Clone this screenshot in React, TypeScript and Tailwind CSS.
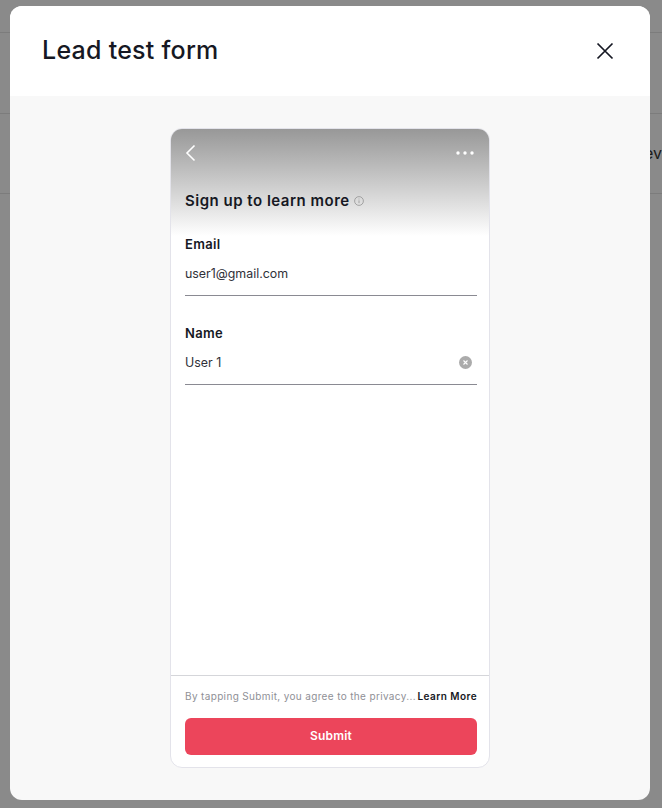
export default function App() {
  return (
    <div className="relative h-[808px] w-[662px] overflow-hidden bg-[#8a8a8a] font-['Inter',sans-serif]">
      <div className="flex flex-col">
        <div className="h-[33px] border-b border-[#7c7c7c]" />
        <div className="h-[81px] border-b border-[#7c7c7c]" />
        <div className="flex h-[80px] items-center justify-end border-b border-[#7c7c7c] pb-[1px]">
          <span className="text-[16px] leading-[20px] text-[#1a1a1a]">ev</span>
        </div>
      </div>
      <div className="absolute left-[10px] top-[6px] flex h-[794px] w-[640px] flex-col overflow-hidden rounded-[12px] bg-[#f8f8f8]">
        <div className="flex h-[90px] shrink-0 items-center justify-between bg-white pl-[32px] pr-[33.5px]">
          <span className="pb-[2px] text-[25px] font-medium leading-[30px] tracking-[0.25px] text-[#161823]">Lead test form</span>
          <svg width="24" height="24" viewBox="0 0 24 24" fill="none" stroke="#161823" strokeWidth="1.7">
            <path d="M4.5 4.5 19.5 19.5M19.5 4.5 4.5 19.5" />
          </svg>
        </div>
        <div className="flex flex-1 justify-center pt-[32px]">
          <div className="flex h-[640px] w-[320px] flex-col overflow-hidden rounded-[12px] border border-[#e3e3ea] bg-white">
            <div className="flex h-[107px] shrink-0 flex-col bg-gradient-to-b from-[#989898] to-white pl-[14px] pr-[15px]">
              <div className="flex h-[47px] items-center justify-between">
                <svg width="12" height="18" viewBox="0 0 12 18" fill="none" stroke="white" strokeWidth="1.6">
                  <path d="M9.5 1.5 2 9l7.5 7.5" />
                </svg>
                <svg width="18" height="4" viewBox="0 0 18 4" fill="white">
                  <circle cx="2" cy="2" r="1.7" />
                  <circle cx="9" cy="2" r="1.7" />
                  <circle cx="16" cy="2" r="1.7" />
                </svg>
              </div>
              <div className="mt-[15px] flex items-center gap-[4px]">
                <span className="text-[15px] font-semibold leading-[20px] tracking-[0.5px] text-[#161823]">Sign up to learn more</span>
                <svg width="10" height="10" viewBox="0 0 10 10" fill="none" stroke="#8a8a8a" strokeWidth="0.7">
                  <circle cx="5" cy="5" r="4.4" />
                  <path d="M5 4.4v2.8M5 2.6v.8" />
                </svg>
              </div>
            </div>
            <div className="flex flex-1 flex-col pl-[14px] pr-[12px]">
              <div className="-mt-[1px] h-[61px] border-b border-[#8a8a92] text-[12.4px] leading-[18px]">
                <div className="text-[13px] font-semibold tracking-[0.3px] text-[#161823]">Email</div>
                <div className="mt-[12px] text-[#2f3038]">user1@gmail.com</div>
              </div>
              <div className="mt-[28px] h-[61px] border-b border-[#8a8a92] text-[12.4px] leading-[18px]">
                <div className="text-[13px] font-semibold tracking-[0.3px] text-[#161823]">Name</div>
                <div className="mt-[12px] flex h-[18px] items-center justify-between pr-[5px] text-[#2f3038]">
                  <span>User 1</span>
                  <svg width="13" height="13" viewBox="0 0 13 13" className="-mt-[2px]">
                    <circle cx="6.5" cy="6.5" r="6.5" fill="#ababab" />
                    <path d="M4.5 4.5l4 4M8.5 4.5l-4 4" stroke="white" strokeWidth="1.1" />
                  </svg>
                </div>
              </div>
            </div>
            <div className="shrink-0 border-t border-[#d5d6da] pb-[12px] pl-[14px] pr-[12px]">
              <div className="flex h-[41px] items-center justify-between pb-[1px] text-[10px] leading-[14px] tracking-[0.35px]">
                <span className="text-[#8f9096]">By tapping Submit, you agree to the privacy...</span>
                <span className="font-semibold tracking-[0.45px] text-[#161823]">Learn More</span>
              </div>
              <div className="mt-[1px] flex h-[37px] items-center justify-center rounded-[6px] bg-[#ec455b] pb-[1px] text-[12px] font-semibold tracking-[0.2px] text-white">
                Submit
              </div>
            </div>
          </div>
        </div>
      </div>
    </div>
  );
}
